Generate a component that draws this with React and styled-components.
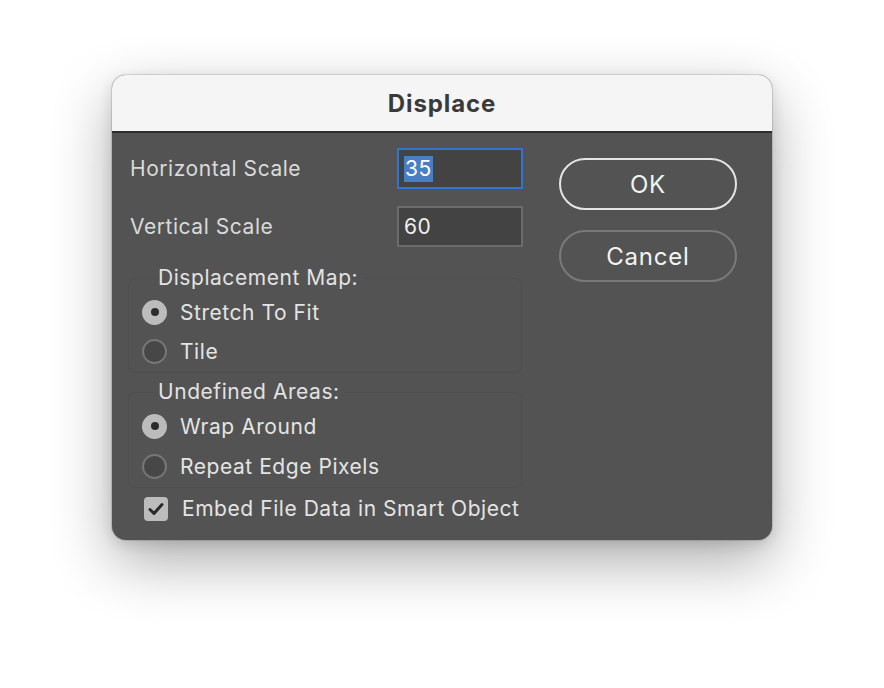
import React from 'react'
import styled, { createGlobalStyle } from 'styled-components'

const GlobalStyle = createGlobalStyle`
  html, body {
    margin: 0;
    padding: 0;
    background: #ffffff;
  }
  body {
    font-family: Inter, "Noto Sans", "Liberation Sans", sans-serif;
    -webkit-font-smoothing: antialiased;
  }
`

const Page = styled.div`
  width: 884px;
  height: 688px;
  display: flex;
  justify-content: center;
  align-items: flex-start;
  padding-top: 75px;
  box-sizing: border-box;
  background: #ffffff;
`

const Window = styled.div`
  width: 660px;
  height: 465px;
  border-radius: 14px;
  overflow: hidden;
  background: #535353;
  box-shadow: 0 0 0 1px rgba(0, 0, 0, 0.12), 0 22px 60px rgba(0, 0, 0, 0.32), 0 4px 14px rgba(0, 0, 0, 0.12);
  display: flex;
  flex-direction: column;
`

const TitleBar = styled.div`
  height: 58px;
  flex-shrink: 0;
  background: #f5f5f5;
  border-bottom: 2px solid #2c2c2c;
  display: flex;
  align-items: center;
  justify-content: center;
  box-sizing: border-box;
  padding-top: 1px;
`

const Title = styled.div`
  font-size: 24px;
  font-weight: 700;
  color: #3a3a3a;
  letter-spacing: 0.9px;
`

const Body = styled.div`
  display: flex;
  padding: 15px 0 0 18px;
  gap: 36px;
  font-size: 21px;
  letter-spacing: 0.55px;
`

const LeftColumn = styled.div`
  width: 393px;
  display: flex;
  flex-direction: column;
`

const RightColumn = styled.div`
  width: 178px;
  display: flex;
  flex-direction: column;
  gap: 20px;
  padding-top: 10px;
`

const FieldRow = styled.div`
  display: flex;
  align-items: center;
  height: 41px;
  margin-bottom: ${p => p.$gap || 0}px;
`

const Label = styled.div`
  width: 267px;
  color: #dadada;
`

const Input = styled.div`
  width: 126px;
  height: 41px;
  box-sizing: border-box;
  background: #434343;
  border: 2px solid ${p => (p.$focused ? '#2f74d6' : '#6b6b6b')};
  display: flex;
  align-items: center;
  padding-left: 5px;
  color: #f0f0f0;
`

const Selected = styled.span`
  background: #4a7ec2;
  color: #ffffff;
  padding: 0 1px;
  line-height: 26px;
`

const Group = styled.fieldset`
  margin: ${p => p.$top}px 0 0 -2px;
  width: 394px;
  box-sizing: border-box;
  border: 1px solid #4e4e4e;
  border-radius: 7px;
  padding: 5px 0 4px 13px;
  display: flex;
  flex-direction: column;
  gap: ${p => p.$rowGap}px;
`

const Legend = styled.legend`
  margin-left: 12px;
  padding: 0 4px;
  color: #e2e2e2;
  line-height: 24px;
`

const OptionRow = styled.div`
  display: flex;
  align-items: center;
  height: 34px;
  gap: 13px;
  color: #e4e4e4;
`

const Radio = styled.span`
  width: 25px;
  height: 25px;
  box-sizing: border-box;
  border-radius: 50%;
  flex-shrink: 0;
  display: flex;
  align-items: center;
  justify-content: center;
  background: ${p => (p.$checked ? '#bcbcbc' : '#474747')};
  border: ${p => (p.$checked ? 'none' : '2px solid #767676')};
  &::after {
    content: '';
    display: ${p => (p.$checked ? 'block' : 'none')};
    width: 8px;
    height: 8px;
    border-radius: 50%;
    background: #2d2d2d;
  }
`

const CheckRow = styled.div`
  display: flex;
  align-items: center;
  gap: 14px;
  margin: 8px 0 0 14px;
  color: #e4e4e4;
`

const CheckBox = styled.span`
  width: 24px;
  height: 24px;
  border-radius: 4px;
  background: #bcbcbc;
  display: flex;
  align-items: center;
  justify-content: center;
  flex-shrink: 0;
`

const Button = styled.div`
  height: 52px;
  box-sizing: border-box;
  border-radius: 26px;
  border: 2px solid ${p => (p.$primary ? '#e4e4e4' : '#7a7a7a')};
  display: flex;
  align-items: center;
  justify-content: center;
  font-size: 24px;
  letter-spacing: 0.8px;
  color: #f2f2f2;
`

const App = () => (
  <Page>
    <GlobalStyle />
    <Window>
      <TitleBar>
        <Title>Displace</Title>
      </TitleBar>
      <Body>
        <LeftColumn>
          <FieldRow $gap={17}>
            <Label>Horizontal Scale</Label>
            <Input $focused><Selected>35</Selected></Input>
          </FieldRow>
          <FieldRow>
            <Label>Vertical Scale</Label>
            <Input>60</Input>
          </FieldRow>
          <Group $top={19} $rowGap={5}>
            <Legend>Displacement Map:</Legend>
            <OptionRow><Radio $checked />Stretch To Fit</OptionRow>
            <OptionRow><Radio />Tile</OptionRow>
          </Group>
          <Group $top={7} $rowGap={6}>
            <Legend>Undefined Areas:</Legend>
            <OptionRow><Radio $checked />Wrap Around</OptionRow>
            <OptionRow><Radio />Repeat Edge Pixels</OptionRow>
          </Group>
          <CheckRow>
            <CheckBox>
              <svg width="16" height="14" viewBox="0 0 16 14">
                <path d="M2 7.5 L6 11.5 L14 2.5" fill="none" stroke="#2a2a2a" strokeWidth="3" strokeLinecap="round" strokeLinejoin="round" />
              </svg>
            </CheckBox>
            Embed File Data in Smart Object
          </CheckRow>
        </LeftColumn>
        <RightColumn>
          <Button $primary>OK</Button>
          <Button>Cancel</Button>
        </RightColumn>
      </Body>
    </Window>
  </Page>
)

export default App
